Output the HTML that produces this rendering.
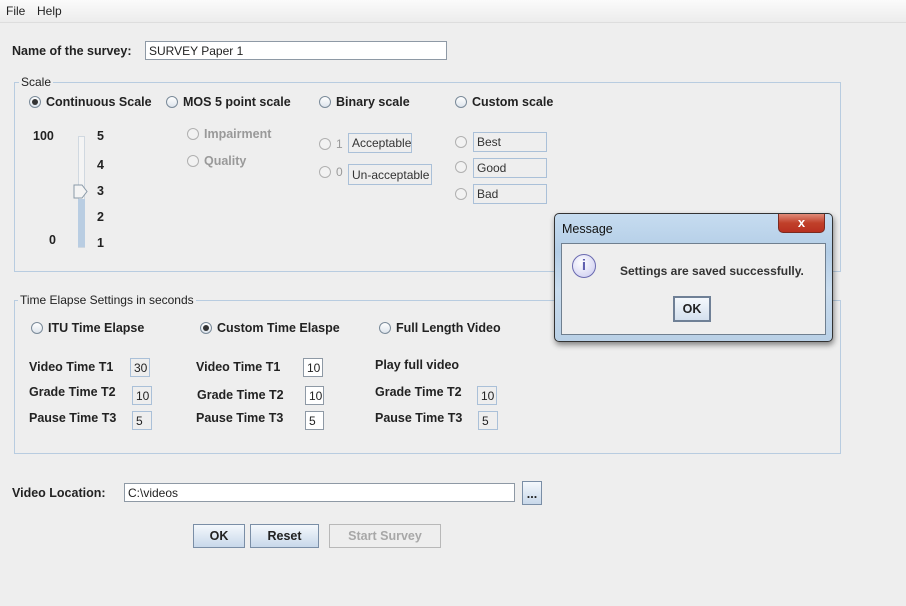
<!DOCTYPE html>
<html><head><meta charset="utf-8"><style>
body{margin:0;width:906px;height:606px;background:#eeeeee;font-family:"Liberation Sans",sans-serif;font-size:12px;color:#222;position:relative;overflow:hidden}
.a{position:absolute;white-space:nowrap;line-height:16px}
.b{font-weight:bold;font-size:12.5px}
.g{color:#999}
.r{position:absolute;width:10px;height:10px;border:1px solid #7a8a99;border-radius:50%;background:linear-gradient(#fff,#dde4ec)}
.r.d{border-color:#b0b0b0;background:#f2f2f2}
.r.s::after{content:"";position:absolute;left:2px;top:2px;width:6px;height:6px;border-radius:50%;background:#333}
.t{position:absolute;background:#fff;border:1px solid #8e99a5;box-sizing:border-box;line-height:18px;padding-left:3px;font-size:12px}
.t.d{background:#eee;border-color:#aac0d8}
.box{position:absolute;border:1px solid #b8cce0}
.btn{position:absolute;box-sizing:border-box;border:1px solid #7a8ea6;background:linear-gradient(#f4f8fc,#c8d8ea);text-align:center;font-weight:bold;font-size:12.5px;line-height:23px}
</style></head><body>
<div style="position:absolute;left:0;top:0;width:906px;height:22px;background:linear-gradient(#fbfbfb,#ececec);border-bottom:1px solid #ddd"></div>
<div class="a" style="left:6px;top:3px">File</div>
<div class="a" style="left:37px;top:3px">Help</div>

<div class="a b" style="left:12px;top:43px">Name of the survey:</div>
<div class="t" style="left:145px;top:41px;width:302px;height:19px">SURVEY Paper 1</div>

<div class="box" style="left:14px;top:82px;width:825px;height:188px"></div>
<div class="a" style="left:19px;top:74px;background:#eee;padding:0 2px">Scale</div>
<div class="r s" style="left:29px;top:96px"></div><div class="a b" style="left:46px;top:94px">Continuous Scale</div>
<div class="r" style="left:166px;top:96px"></div><div class="a b" style="left:183px;top:94px">MOS 5 point scale</div>
<div class="r" style="left:319px;top:96px"></div><div class="a b" style="left:336px;top:94px">Binary scale</div>
<div class="r" style="left:455px;top:96px"></div><div class="a b" style="left:472px;top:94px">Custom scale</div>

<div class="a b" style="left:33px;top:128px">100</div>
<div class="a b" style="left:49px;top:232px">0</div>
<div style="position:absolute;left:78px;top:136px;width:5px;height:110px;border:1px solid #d0d8e0;background:#f4f4f4"></div>
<div style="position:absolute;left:78px;top:199px;width:7px;height:48px;background:#b9cde2"></div>
<svg style="position:absolute;left:73px;top:184px" width="16" height="16"><path d="M1 1H9L14 7.5L9 14H1Z" fill="#f4f4f4" stroke="#8a9aa8"/></svg>
<div class="a b" style="left:97px;top:128px">5</div>
<div class="a b" style="left:97px;top:157px">4</div>
<div class="a b" style="left:97px;top:183px">3</div>
<div class="a b" style="left:97px;top:209px">2</div>
<div class="a b" style="left:97px;top:235px">1</div>

<div class="r d" style="left:187px;top:128px"></div><div class="a b g" style="left:204px;top:126px">Impairment</div>
<div class="r d" style="left:187px;top:155px"></div><div class="a b g" style="left:204px;top:153px">Quality</div>

<div class="r d" style="left:319px;top:138px"></div><div class="a g" style="left:336px;top:136px">1</div>
<div class="t d" style="left:348px;top:133px;width:64px;height:20px;color:#333">Acceptable</div>
<div class="r d" style="left:319px;top:166px"></div><div class="a g" style="left:336px;top:164px">0</div>
<div class="t d" style="left:348px;top:164px;width:84px;height:21px;line-height:20px;color:#333">Un-acceptable</div>

<div class="r d" style="left:455px;top:136px"></div><div class="t d" style="left:473px;top:132px;width:74px;height:20px;color:#333">Best</div>
<div class="r d" style="left:455px;top:161px"></div><div class="t d" style="left:473px;top:158px;width:74px;height:20px;color:#333">Good</div>
<div class="r d" style="left:455px;top:188px"></div><div class="t d" style="left:473px;top:184px;width:74px;height:20px;color:#333">Bad</div>

<div class="box" style="left:14px;top:300px;width:825px;height:152px"></div>
<div class="a" style="left:18px;top:292px;background:#eee;padding:0 2px">Time Elapse Settings in seconds</div>
<div class="r" style="left:31px;top:322px"></div><div class="a b" style="left:48px;top:320px">ITU Time Elapse</div>
<div class="r s" style="left:200px;top:322px"></div><div class="a b" style="left:217px;top:320px">Custom Time Elaspe</div>
<div class="r" style="left:379px;top:322px"></div><div class="a b" style="left:396px;top:320px">Full Length Video</div>

<div class="a b" style="left:29px;top:359px">Video Time T1</div><div class="t d" style="left:130px;top:358px;width:20px;height:19px">30</div>
<div class="a b" style="left:29px;top:384px">Grade Time T2</div><div class="t d" style="left:132px;top:386px;width:20px;height:19px">10</div>
<div class="a b" style="left:29px;top:410px">Pause Time T3</div><div class="t d" style="left:132px;top:411px;width:20px;height:19px">5</div>

<div class="a b" style="left:196px;top:359px">Video Time T1</div><div class="t" style="left:303px;top:358px;width:20px;height:19px">10</div>
<div class="a b" style="left:197px;top:387px">Grade Time T2</div><div class="t" style="left:305px;top:386px;width:19px;height:19px">10</div>
<div class="a b" style="left:196px;top:410px">Pause Time T3</div><div class="t" style="left:305px;top:411px;width:19px;height:19px">5</div>

<div class="a b" style="left:375px;top:357px">Play full video</div>
<div class="a b" style="left:375px;top:384px">Grade Time T2</div><div class="t d" style="left:477px;top:386px;width:20px;height:19px">10</div>
<div class="a b" style="left:375px;top:410px">Pause Time T3</div><div class="t d" style="left:478px;top:411px;width:20px;height:19px">5</div>

<div class="a b" style="left:12px;top:485px">Video Location:</div>
<div class="t" style="left:124px;top:483px;width:391px;height:19px">C:\videos</div>
<div class="btn" style="left:522px;top:481px;width:20px;height:24px;line-height:24px">...</div>

<div class="btn" style="left:193px;top:524px;width:52px;height:24px">OK</div>
<div class="btn" style="left:250px;top:524px;width:69px;height:24px">Reset</div>
<div class="btn" style="left:329px;top:524px;width:112px;height:24px;background:#eee;border-color:#b8b8b8;color:#a8a8a8">Start Survey</div>

<div style="position:absolute;left:554px;top:213px;width:277px;height:127px;border:1px solid #333;border-radius:5px;background:linear-gradient(180deg,#c6dcf0 0%,#b3cde6 30%,#c9dcee 60%,#b9d0e6 100%);box-shadow:1px 3px 6px rgba(0,0,0,.45)"></div>
<div class="a" style="left:562px;top:221px;font-size:12.5px;color:#111">Message</div>
<div style="position:absolute;left:778px;top:214px;width:45px;height:18px;border:1px solid #7a2a20;border-top:none;border-radius:0 0 5px 5px;background:linear-gradient(#e08a78,#c0402a 50%,#b83020);color:#fff;text-align:center;font-weight:bold;font-size:13px;line-height:18px">x</div>
<div style="position:absolute;left:561px;top:243px;width:263px;height:90px;border:1px solid #6f7f8f;background:#eee"></div>
<div style="position:absolute;left:572px;top:254px;width:24px;height:24px;border-radius:50%;border:1px solid #6a6ab0;background:radial-gradient(circle at 40% 35%,#fff,#c8c8ef);box-sizing:border-box;text-align:center;color:#6060b0;font-weight:bold;font-size:15px;line-height:22px">i</div>
<div class="a b" style="left:620px;top:263px;font-size:12px;color:#333">Settings are saved successfully.</div>
<div class="btn" style="left:673px;top:296px;width:38px;height:26px;border:2px solid #6f8096;line-height:23px;background:linear-gradient(#f4f8fc,#d4e0ee)">OK</div>
</body></html>
